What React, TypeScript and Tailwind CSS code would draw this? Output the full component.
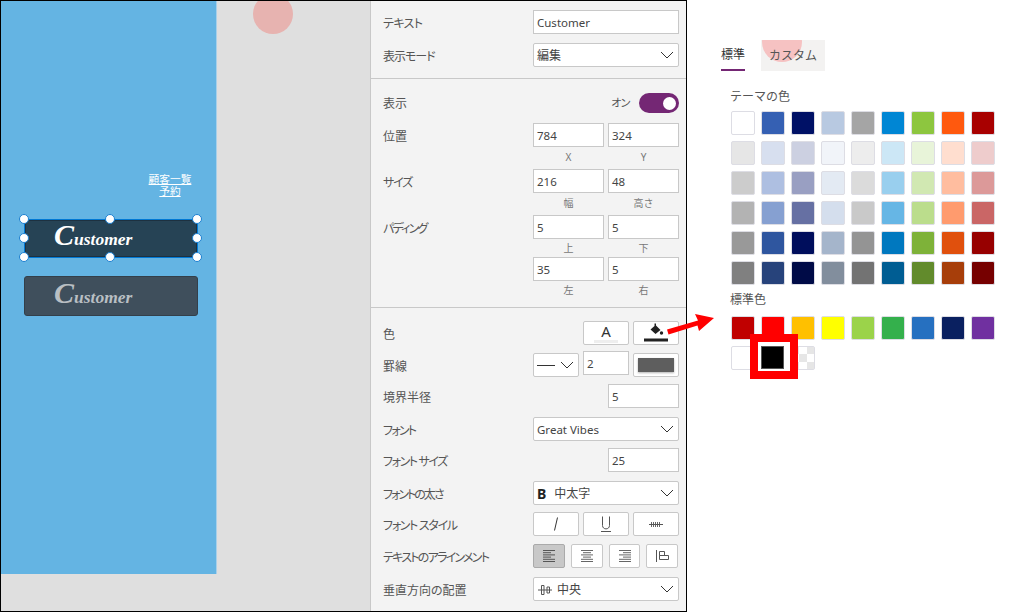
import React from "react";

const theme = [
  ["#ffffff", "#3560b3", "#001166", "#b8c9e1", "#a5a5a5", "#0086d4", "#8dc63f", "#ff590e", "#a80000"],
  ["#e6e6e6", "#d7dfef", "#ccd0e1", "#f1f4f9", "#ededed", "#cce7f6", "#e8f4d9", "#ffdecf", "#eecccc"],
  ["#cccccc", "#aebfe1", "#999fc2", "#e3eaf3", "#dbdbdb", "#99cfee", "#d1e8b2", "#ffbd9f", "#dc9999"],
  ["#b3b3b3", "#86a0d1", "#6670a3", "#d4deed", "#c9c9c9", "#66b6e5", "#bbdd8c", "#ff9b6e", "#ca6666"],
  ["#999999", "#2f569f", "#000e5c", "#a5b5cb", "#949494", "#0078bf", "#7eb239", "#e0500d", "#970000"],
  ["#808080", "#27437b", "#000b47", "#828e9d", "#737373", "#005d93", "#628b2c", "#a73e0a", "#760000"],
];
const standard = ["#c00000", "#ff0000", "#ffc000", "#ffff00", "#9bd34a", "#34b04c", "#2670c0", "#0a2060", "#7030a0"];

const Chevron = () => (
  <svg width="14" height="8" viewBox="0 0 14 8" fill="none" stroke="#333" strokeWidth="1">
    <path d="M1 1l6 6 6-6" />
  </svg>
);

const box = "h-[24px] bg-white border border-[#c8c8c8] flex items-center text-[11.5px] text-[#444]";

const Input = ({ v, w = "w-[71px]" }: { v: string; w?: string }) => (
  <div className={`${box} ${w} pl-[3px]`}>
    <span className="pt-px">{v}</span>
  </div>
);

const Select = ({ children, w = "w-[146px]" }: { children: React.ReactNode; w?: string }) => (
  <div className={`${box} ${w} pl-[3px] pr-[4px] justify-between rounded-[2px]`}>
    <div className="flex items-center pt-px">{children}</div>
    <Chevron />
  </div>
);

const Btn = ({ children, w = "w-[46px]", active }: { children?: React.ReactNode; w?: string; active?: boolean }) => (
  <div
    className={`h-[24px] ${w} border flex items-center justify-center rounded-[2px] ${
      active ? "bg-[#c8c8c8] border-[#aaaaaa]" : "bg-white border-[#c8c8c8]"
    }`}
  >
    {children}
  </div>
);

const Row = ({
  label,
  children,
  mt,
  track = "",
}: {
  label: string;
  children: React.ReactNode;
  mt: string;
  track?: string;
}) => (
  <div className={`flex items-center justify-between h-[24px] ${mt}`}>
    <span className={`pt-[3px] whitespace-nowrap text-[12px] text-[#555] [font-feature-settings:'palt'] ${track}`}>{label}</span>
    {children}
  </div>
);

const Sub = ({ a, b, h }: { a: string; b: string; h: string }) => (
  <div className={`flex justify-end gap-[4px] ${h}`}>
    <span className="w-[71px] text-center text-[10px] leading-none self-center text-[#777]">{a}</span>
    <span className="w-[71px] text-center text-[10px] leading-none self-center text-[#777]">{b}</span>
  </div>
);

const Pair = ({ a, b }: { a: string; b: string }) => (
  <div className="flex gap-[4px]">
    <Input v={a} />
    <Input v={b} />
  </div>
);

const Handle = ({ pos }: { pos: string }) => (
  <div className={`absolute w-[10px] h-[10px] rounded-full bg-white border border-[#1b7fd0] ${pos}`} />
);

const Swatch = ({ c }: { c: string }) => (
  <div className="w-[24px] h-[24px] rounded-[2px] border border-[#dddde4]" style={{ backgroundColor: c }} />
);

const AlignIcon = ({ lines, stroke = "#666" }: { lines: [number, number][]; stroke?: string }) => (
  <svg width="14" height="14" viewBox="0 0 14 14" stroke={stroke} strokeWidth="1">
    {lines.map(([a, b], i) => (
      <path key={i} d={`M${a} ${1.5 + i * 2.2}H${b}`} />
    ))}
  </svg>
);

const Script = ({ color }: { color: string }) => (
  <span className={`pb-[5px] italic font-bold font-['Liberation_Serif',serif] ${color}`}>
    <span className="text-[30px] leading-none">C</span>
    <span className="text-[17.5px] leading-none">ustomer</span>
  </span>
);

export default function App() {
  return (
    <div className="relative w-[1012px] h-[612px] flex bg-white overflow-hidden font-['Noto_Sans','Noto_Sans_CJK_JP',sans-serif]">
      {/* Left screenshot */}
      <div className="w-[687px] h-[612px] flex border border-black shrink-0">
        {/* Canvas */}
        <div className="relative w-[369px] h-full bg-[#dfdfdf] overflow-hidden">
          <div className="absolute left-[252px] top-[-7px] w-[40px] h-[40px] rounded-full bg-[#e7b3b0]" />
          <div className="w-[216px] h-[573px] bg-[#64b4e3] border-r border-[#a8d0ea] flex flex-col pt-[172px]">
            <div className="ml-[126px] w-[86px] text-center text-white text-[10.7px] leading-[12px] underline font-['Noto_Sans_CJK_JP',serif]">
              顧客一覧
              <br />
              予約
            </div>
            <div className="relative ml-[23px] mt-[22px] w-[174px] h-[39px] bg-[#264355] border border-[#0078d4] outline outline-1 outline-offset-[-2px] outline-[#1d3140] flex items-center pl-[29px]">
              <Script color="text-white" />
              <Handle pos="left-[-6px] top-[-6px]" />
              <Handle pos="left-[80px] top-[-6px]" />
              <Handle pos="right-[-5px] top-[-6px]" />
              <Handle pos="left-[-6px] top-[13px]" />
              <Handle pos="right-[-5px] top-[13px]" />
              <Handle pos="left-[-6px] bottom-[-5px]" />
              <Handle pos="left-[80px] bottom-[-5px]" />
              <Handle pos="right-[-5px] bottom-[-5px]" />
            </div>
            <div className="ml-[23px] mt-[18px] w-[174px] h-[40px] bg-[#3f4f5c] border border-[#333f4a] rounded-[3px] flex items-center pl-[29px]">
              <Script color="text-[#b9bfc3]" />
            </div>
          </div>
        </div>

        {/* Properties panel */}
        <div className="flex-1 bg-[#f3f3f3] border-l border-[#c8c8c8] flex flex-col">
          <div className="h-[78px] pt-[9px] pl-[12px] pr-[7px] border-b border-[#c8c8c8]">
            <Row label="テキスト" mt="mt-0" track="tracking-[-0.6px]">
              <Input v="Customer" w="w-[146px]" />
            </Row>
            <Row label="表示モード" mt="mt-[9px]" track="tracking-[-1px]">
              <Select>
                <span className="text-[12px]">編集</span>
              </Select>
            </Row>
          </div>

          <div className="h-[229px] pt-[14px] pl-[12px] pr-[7px] border-b border-[#c8c8c8]">
            <div className="flex items-center justify-between h-[20px]">
              <span className="pt-[2px] text-[12px] text-[#555]">表示</span>
              <div className="flex items-center gap-[10px]">
                <span className="text-[11px] text-[#555] tracking-[-2px]">オン</span>
                <div className="w-[40px] h-[20px] rounded-full bg-[#742774] flex items-center justify-end pr-[3px]">
                  <div className="w-[13px] h-[13px] rounded-full bg-white" />
                </div>
              </div>
            </div>
            <Row label="位置" mt="mt-[10px]">
              <Pair a="784" b="324" />
            </Row>
            <Sub a="X" b="Y" h="h-[22px] pb-[3px]" />
            <Row label="サイズ" mt="mt-0" track="tracking-[-1.2px]">
              <Pair a="216" b="48" />
            </Row>
            <Sub a="幅" b="高さ" h="h-[22px] pb-[2px]" />
            <Row label="パディング" mt="mt-0" track="tracking-[-1.8px]">
              <Pair a="5" b="5" />
            </Row>
            <Sub a="上" b="下" h="h-[18px]" />
            <div className="flex justify-end">
              <Pair a="35" b="5" />
            </div>
            <Sub a="左" b="右" h="h-[18px]" />
          </div>

          <div className="pt-[13px] pl-[12px] pr-[7px]">
            <Row label="色" mt="mt-0">
              <div className="flex gap-[4px]">
                <Btn>
                  <div className="relative h-full w-full flex items-center justify-center text-[15px] text-[#333] pb-[4px]">
                    A
                    <div className="absolute left-[10px] right-[10px] bottom-[1px] h-[3px] bg-[#eeeeee]" />
                  </div>
                </Btn>
                <Btn>
                  <svg width="26" height="20" viewBox="0 0 26 20">
                    <path d="M11.5 0.5h1.5v2l4.5 4.5-5 4-5-4.5 4-3.5z" fill="#222" />
                    <circle cx="18.5" cy="10" r="1.7" fill="#222" />
                    <rect x="1" y="15.5" width="24" height="3" fill="#222" />
                  </svg>
                </Btn>
              </div>
            </Row>
            <Row label="罫線" mt="mt-[8px]">
              <div className="flex gap-[4px]">
                <Select w="w-[46px]">
                  <div className="w-[18px] h-px bg-[#333]" />
                </Select>
                <div className="-mt-[2px]">
                  <Input v="2" w="w-[46px]" />
                </div>
                <Btn>
                  <div className="w-[36px] h-[14px] bg-[#5e5e5e] shadow-[0_1px_2px_rgba(0,0,0,0.3)]" />
                </Btn>
              </div>
            </Row>
            <Row label="境界半径" mt="mt-[7px]">
              <Input v="5" />
            </Row>
            <Row label="フォント" mt="mt-[9px]" track="tracking-[-1.75px]">
              <Select>Great Vibes</Select>
            </Row>
            <Row label="フォント サイズ" mt="mt-[7px]" track="tracking-[-1.4px]">
              <Input v="25" />
            </Row>
            <Row label="フォントの太さ" mt="mt-[9px]" track="tracking-[-2px]">
              <Select>
                <span className="font-bold text-[14px] text-[#222] mr-[8px]">B</span>
                <span className="text-[12px]">中太字</span>
              </Select>
            </Row>
            <Row label="フォント スタイル" mt="mt-[7px]" track="tracking-[-1.3px]">
              <div className="flex gap-[4px]">
                <Btn>
                  <svg width="10" height="18" viewBox="0 0 10 18" stroke="#333" strokeWidth="1">
                    <path d="M6.5 2.5L3.5 15.5" />
                  </svg>
                </Btn>
                <Btn>
                  <svg width="12" height="18" viewBox="0 0 12 18" fill="none" stroke="#555" strokeWidth="1">
                    <path d="M2.5 1.5v9c0 4.5 7 4.5 7 0v-9M1 16.5h10" />
                  </svg>
                </Btn>
                <Btn>
                  <svg width="14" height="8" viewBox="0 0 14 8" stroke="#555" strokeWidth="1">
                    <path d="M0 4.5h14" />
                    <path d="M2.5 2v5M4.5 2v5M6.5 2v5M8.5 2v5M10.5 2v5" strokeWidth="0.9" />
                  </svg>
                </Btn>
              </div>
            </Row>
            <Row label="テキストのアラインメント" mt="mt-[8px]" track="tracking-[-1.75px]">
              <div className="flex gap-[6px] mr-px">
                <Btn w="w-[32px]" active>
                  <AlignIcon stroke="#555" lines={[[1, 13], [1, 9], [1, 13], [1, 9], [1, 13], [1, 13]]} />
                </Btn>
                <Btn w="w-[32px]">
                  <AlignIcon lines={[[1, 13], [3, 11], [1, 13], [3, 11], [1, 13], [1, 13]]} />
                </Btn>
                <Btn w="w-[31px]">
                  <AlignIcon lines={[[1, 13], [5, 13], [1, 13], [5, 13], [1, 13], [1, 13]]} />
                </Btn>
                <Btn w="w-[32px]">
                  <svg width="14" height="14" viewBox="0 0 14 14" fill="none" stroke="#555" strokeWidth="1">
                    <path d="M1.5 1v12M4.5 2.5h5v4h-5zM4.5 6.5h9v4h-9z" />
                  </svg>
                </Btn>
              </div>
            </Row>
            <Row label="垂直方向の配置" mt="mt-[9px]">
              <Select>
                <svg width="14" height="12" viewBox="0 0 14 12" fill="none" stroke="#555" strokeWidth="1" className="mr-[5px] ml-px">
                  <path d="M0 6h14M3.5 1.5h2.5v9H3.5zM9 3h2.5v6H9z" />
                </svg>
                <span className="text-[12px]">中央</span>
              </Select>
            </Row>
          </div>
        </div>
      </div>

      {/* Colour picker */}
      <div className="flex-1 pt-[40px] pl-[34px]">
        <div className="flex h-[31px]">
          <div className="w-[24px] h-[31px] border-b-2 border-[#742774] flex items-center justify-center text-[12px] text-[#333] whitespace-nowrap">
            <span className="pt-px">標準</span>
          </div>
          <div className="relative ml-[16px] w-[64px] h-[31px] bg-[#f3f2f1] overflow-hidden flex items-center justify-center text-[12px] text-[#555]">
            <div className="absolute left-[1px] top-[-18px] w-[40px] h-[40px] rounded-full bg-[#f6c2c2]" />
            <span className="relative pt-px">カスタム</span>
          </div>
        </div>
        <div className="ml-[9px] mt-[18px] text-[12px] leading-[16px] text-[#555]">テーマの色</div>
        <div className="ml-[10px] mt-[6px] grid grid-cols-[repeat(9,24px)] gap-[6px]">
          {theme.flat().map((c, i) => (
            <Swatch key={i} c={c} />
          ))}
        </div>
        <div className="ml-[9px] mt-[7px] text-[12px] leading-[16px] text-[#555]">標準色</div>
        <div className="ml-[10px] mt-[8px] grid grid-cols-[repeat(9,24px)] gap-[6px]">
          {standard.map((c) => (
            <Swatch key={c} c={c} />
          ))}
          <Swatch c="#ffffff" />
          <Swatch c="#000000" />
          <div className="w-[24px] h-[24px] rounded-[2px] border border-[#dddde4] grid grid-cols-3 grid-rows-3">
            {[0, 1, 0, 1, 0, 1, 0, 1, 0].map((v, i) => (
              <div key={i} className={v ? "bg-white" : "bg-[#e6e6e6]"} />
            ))}
          </div>
        </div>
      </div>

      {/* Annotations */}
      <div className="absolute left-[750px] top-[334px] w-[48px] h-[45px] border-[8px] border-[#ff0000] pl-[3px] pr-[6px] pt-[4px] pb-[2px] bg-white">
        <div className="w-full h-full bg-black border border-[#555]" />
      </div>
      <svg className="absolute left-[660px] top-[310px]" width="60" height="30" viewBox="0 0 60 30" fill="#ff0000">
        <path d="M7 19.5L38 10.5 35 4 54 8 39 21 37.5 15.5 8.5 24.5z" />
      </svg>
    </div>
  );
}
